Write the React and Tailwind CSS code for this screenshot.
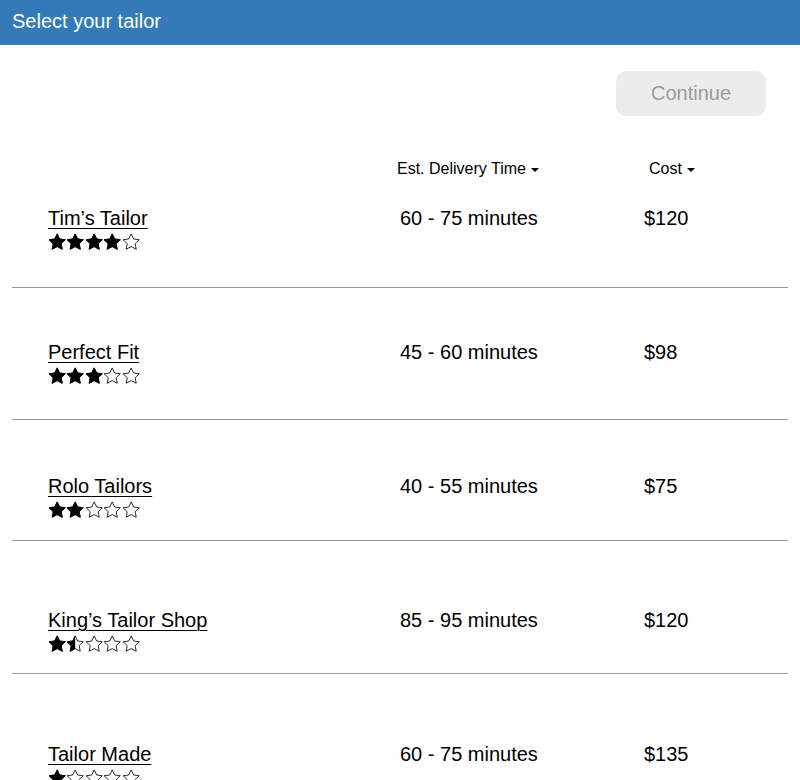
import React from 'react';

const tailors = [
  { name: 'Tim’s Tailor', rating: 4, time: '60 - 75 minutes', cost: '$120', pad: 'pt-0 pb-[36px]' },
  { name: 'Perfect Fit', rating: 3, time: '45 - 60 minutes', cost: '$98', pad: 'pt-[53px] pb-[34px]' },
  { name: 'Rolo Tailors', rating: 2, time: '40 - 55 minutes', cost: '$75', pad: 'pt-[55px] pb-[21px]' },
  { name: 'King’s Tailor Shop', rating: 1.5, time: '85 - 95 minutes', cost: '$120', pad: 'pt-[68px] pb-[20px]' },
  { name: 'Tailor Made', rating: 1, time: '60 - 75 minutes', cost: '$135', pad: 'pt-[69px] pb-[36px]' },
];

const STAR = 'M12 1.2l3.3 6.8 7.5 1-5.5 5.2 1.4 7.5L12 18.1l-6.7 3.6 1.4-7.5L1.2 9l7.5-1z';

const Star = ({ fill, id }) => (
  <svg width="18.4" height="18" viewBox="0 0 24 24" className="block">
    <defs>
      <clipPath id={id}>
        <rect x="0" y="0" width={fill * 24} height="24" />
      </clipPath>
    </defs>
    <path d={STAR} fill="none" stroke="#000" strokeWidth="1.1" strokeLinejoin="round" />
    {fill > 0 && <path d={STAR} fill="#000" stroke="#000" strokeWidth="1.1" strokeLinejoin="round" clipPath={`url(#${id})`} />}
  </svg>
);

const Stars = ({ rating, row }) => (
  <div className="flex mt-1 h-[18px]">
    {[0, 1, 2, 3, 4].map((i) => {
      const fill = Math.max(0, Math.min(1, rating - i));
      return <Star key={i} fill={fill} id={`star-${row}-${i}`} />;
    })}
  </div>
);

const Caret = () => (
  <span className="inline-block w-0 h-0 ml-[5px] align-middle border-x-[4px] border-x-transparent border-t-[4px] border-t-black" />
);

const App = () => {
  return (
    <div className="min-h-screen bg-white text-black" style={{ fontFamily: '"Liberation Sans", Arial, sans-serif' }}>
      <div className="h-[45px] bg-[#337ab7] flex items-center px-3">
        <h1 className="text-white text-[20px] leading-none -mt-[3px]">Select your tailor</h1>
      </div>

      <div className="flex justify-end pr-[34px] pt-[26px]">
        <button
          type="button"
          disabled
          className="w-[150px] h-[45px] rounded-[10px] bg-[#ececec] text-[#9b9b9b] text-[20px] leading-none pb-[2px]"
        >
          Continue
        </button>
      </div>

      <div className="px-3">
        <div className="grid grid-cols-[352px_244px_1fr] pl-9 pt-[43px] pb-[28px] text-[16px] leading-[20px]">
          <div />
          <div className="-ml-[3px]">
            Est. Delivery Time
            <Caret />
          </div>
          <div className="ml-[5px]">
            Cost
            <Caret />
          </div>
        </div>

        {tailors.map((t, i) => (
          <div
            key={t.name}
            className={`grid grid-cols-[352px_244px_1fr] pl-9 border-b border-[#999] leading-[22px] ${t.pad}`}
          >
            <div>
              <div className="h-[22px]">
                <a href="#" className="text-[20px] leading-[22px] underline underline-offset-[3px] decoration-1 text-black">
                  {t.name}
                </a>
              </div>
              <Stars rating={t.rating} row={i} />
            </div>
            <div className="text-[20px] leading-[22px]">{t.time}</div>
            <div className="text-[20px] leading-[22px]">{t.cost}</div>
          </div>
        ))}
      </div>
    </div>
  );
};

export default App;
